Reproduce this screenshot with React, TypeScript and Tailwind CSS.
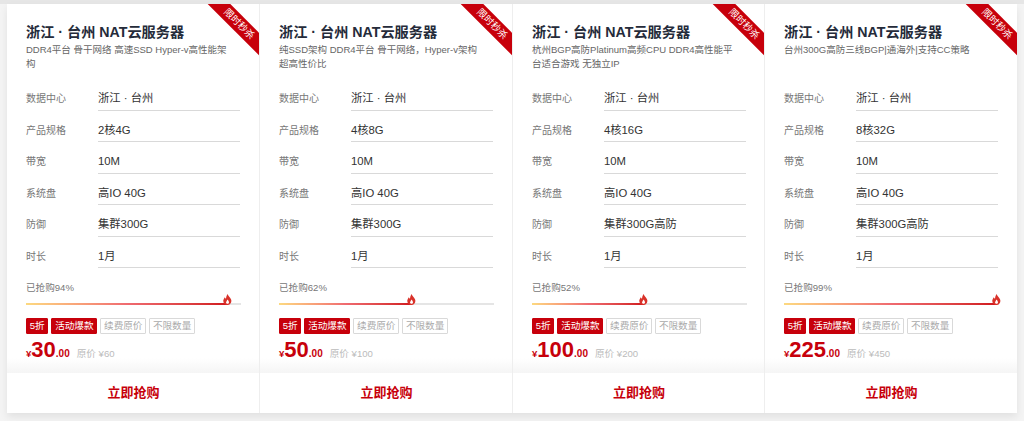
const font = { fontFamily: '"Liberation Sans", "Noto Sans CJK SC", sans-serif' };

type P = {
  desc: string; spec: string; def: string; pct: number; bar: number; price: string; orig: string;
};

const data: P[] = [
  { desc: "DDR4平台 骨干网络 高速SSD Hyper-v高性能架构", spec: "2核4G", def: "集群300G", pct: 94, bar: 202, price: "30", orig: "¥60" },
  { desc: "纯SSD架构 DDR4平台 骨干网络，Hyper-v架构 超高性价比", spec: "4核8G", def: "集群300G", pct: 62, bar: 133, price: "50", orig: "¥100" },
  { desc: "杭州BGP高防Platinum高频CPU DDR4高性能平台适合游戏 无独立IP", spec: "4核16G", def: "集群300G高防", pct: 52, bar: 112, price: "100", orig: "¥200" },
  { desc: "台州300G高防三线BGP|通海外|支持CC策略", spec: "8核32G", def: "集群300G高防", pct: 99, bar: 213, price: "225", orig: "¥450" },
];

function Flame() {
  return (
    <svg width="9" height="11" viewBox="0 0 9 11" className="absolute right-[-4px] bottom-0">
      <path d="M4.6 0C5 2 7 3 8 5.2 9.2 8 7.4 11 4.5 11 1.6 11-.2 8.600.4 6 .7 4.800 1.400 4 1.800 3.200 2.200 4 2.500 4.500 3 4.800 3.200 3 3.500 1.500 4.600 0Z" fill="#d9322a" />
      <path d="M4.500 5.500C5.800 7 6.200 8 5.900 9 5.600 10 3.400 10 3.100 9 2.800 8 3.800 7 4.500 5.500Z" fill="#fff" />
    </svg>
  );
}

function Row({ label, value }: { label: string; value: string }) {
  return (
    <div className="flex h-[31.5px] items-start">
      <div className="w-[72px] pt-[12px] text-[10px] leading-[16px] text-[#777]">{label}</div>
      <div className="h-[31.5px] w-[142px] border-b border-[#d9d9d9] pt-[9px] text-[11.3px] leading-[20px] text-[#333]">{value}</div>
    </div>
  );
}

function Tag({ children, solid }: { children: string; solid?: boolean }) {
  return (
    <span className={solid
      ? "h-[16px] rounded-[1px] border border-[#c7000b] bg-[#c7000b] px-[2.75px] text-[9.6px] leading-[14px] text-white"
      : "h-[16px] rounded-[1px] border border-[#d9d9d9] px-[2.75px] text-[9.6px] leading-[14px] text-[#aaa]"}>
      {children}
    </span>
  );
}

function Card({ p, wide, last }: { p: P; wide?: boolean; last?: boolean }) {
  return (
    <div className={`relative flex flex-none flex-col overflow-hidden bg-white ${wide ? "w-[253px]" : "w-[252px]"} ${last ? "" : "border-r border-[#eeeeee]"}`}>
      <div className="absolute right-[-28px] top-[12px] h-[16px] w-[96px] rotate-45 bg-[#c7000b] text-center text-[9.6px] leading-[16px] text-white">限时秒杀</div>
      <div className="h-[369px] bg-gradient-to-b from-white from-[96%] to-[#f5f5f5] pl-[19px] pt-[18px]">
        <div className="text-[14.2px] font-bold leading-[20px] text-[#252b3a]">浙江 · 台州 NAT云服务器</div>
        <div className="mt-[1px] h-[28px] w-[203px] text-[9.5px] leading-[14px] text-[#666]">{p.desc}</div>
        <div className="mt-[8px]">
          <Row label="数据中心" value="浙江 · 台州" />
          <Row label="产品规格" value={p.spec} />
          <Row label="带宽" value="10M" />
          <Row label="系统盘" value="高IO 40G" />
          <Row label="防御" value={p.def} />
          <Row label="时长" value="1月" />
        </div>
        <div className="mt-[13px] text-[9.6px] leading-[14px] text-[#777]">已抢购{p.pct}%</div>
        <div className="relative mt-[8px] h-[2px] w-[215px] bg-[#e5e5e5]">
          <div className="relative h-[2px] bg-gradient-to-r from-[#fcd980] via-[#ef6a70] to-[#d0141c]" style={{ width: p.bar }}>
            <Flame />
          </div>
        </div>
        <div className="mt-[13px] flex gap-[3px]">
          <Tag solid>5折</Tag>
          <Tag solid>活动爆款</Tag>
          <Tag>续费原价</Tag>
          <Tag>不限数量</Tag>
        </div>
        <div className="mt-[4px] flex h-[24px] items-baseline font-bold text-[#c7000b]">
          <span className="text-[9.6px]">¥</span>
          <span className="text-[22px] leading-[24px]">{p.price}</span>
          <span className="text-[10px]">.00</span>
          <span className="ml-[7px] text-[9.6px] font-normal text-[#bbb]">原价 {p.orig}</span>
        </div>
      </div>
      <div className="flex h-[40px] items-center justify-center bg-white pl-[1px] text-[13px] font-bold text-[#c7000b]">立即抢购</div>
    </div>
  );
}

export default function App() {
  return (
    <div style={font} className="h-[421px] w-[1024px] bg-[linear-gradient(#e6e6e6,#e6e6e6_4px,#f4f4f4_4px,#f4f4f4)] px-[7px] pt-[4px]">
      <div className="flex h-[409px] w-[1010px] shadow-[0_4px_8px_rgba(0,0,0,0.08)]">
        {data.map((p, i) => <Card key={i} p={p} wide={i < 2} last={i === 3} />)}
      </div>
    </div>
  );
}
